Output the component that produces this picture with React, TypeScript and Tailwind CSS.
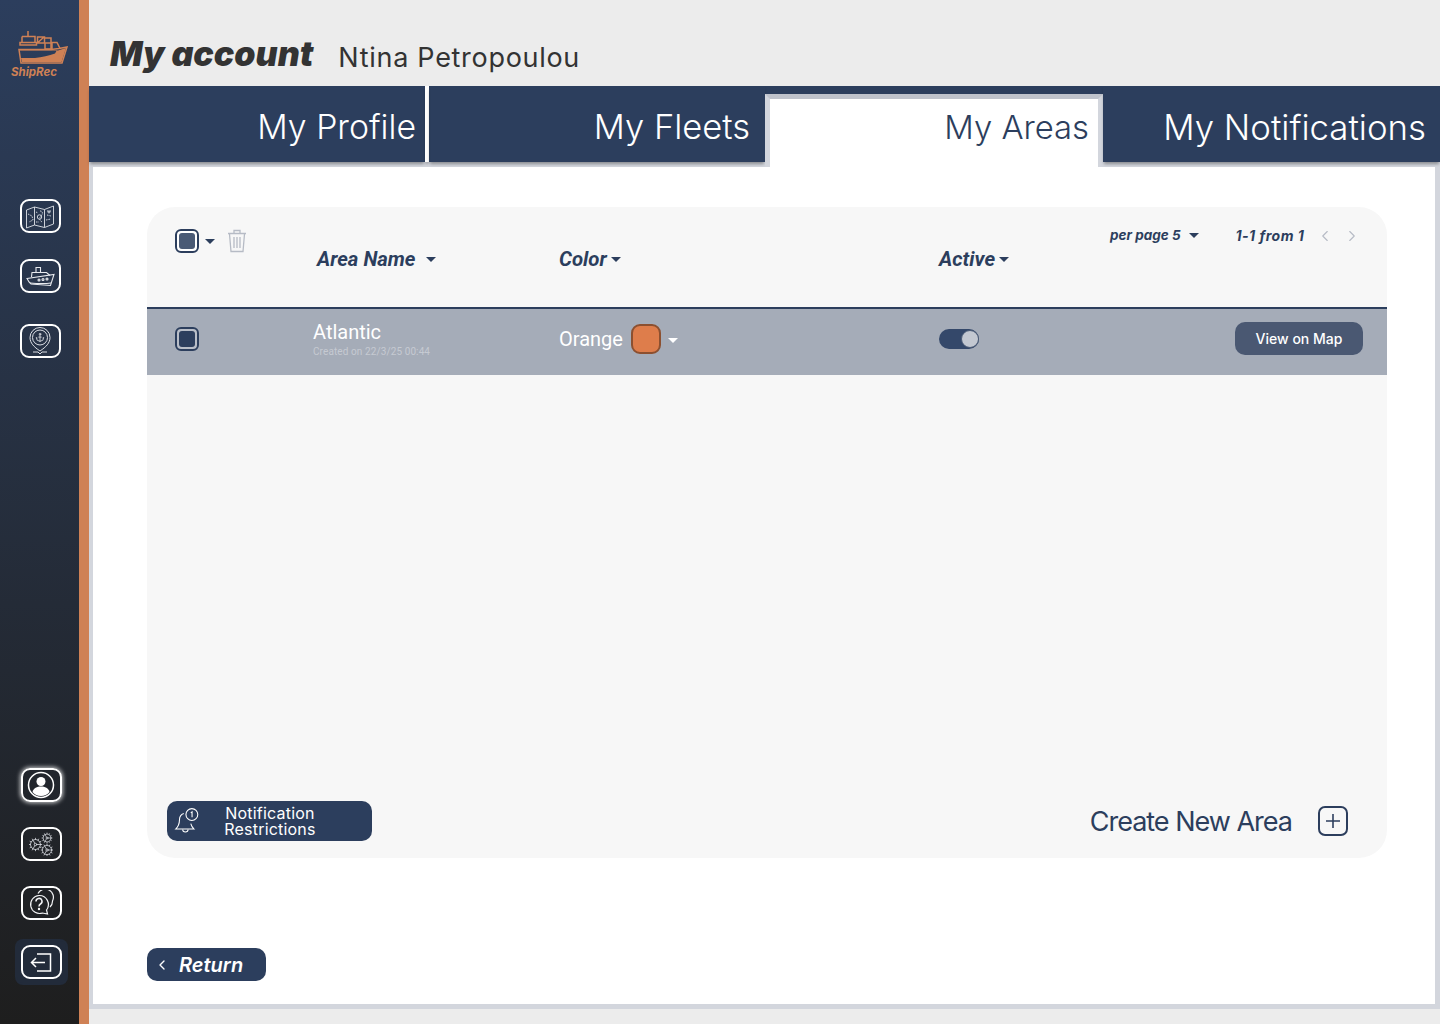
import { Anchor, ChevronLeft, ChevronRight, Cog } from "lucide-react";
import type { ReactNode } from "react";

const Caret = ({ white }: { white?: boolean }) => (
  <svg width="10" height="5" viewBox="0 0 10 5" className="shrink-0">
    <path d="M0 0h10L5 5z" fill={white ? "#ffffff" : "#2c3e5d"} />
  </svg>
);

const Checkbox = ({ fill, ring }: { fill: string; ring: string }) => (
  <div className={`w-[24px] h-[24px] rounded-[6px] border-[2px] border-[#2c3e5d] p-[2px] shrink-0 ${ring}`}>
    <div className={`w-full h-full rounded-[3px] ${fill}`} />
  </div>
);

const NavBox = ({ children, glow }: { children: ReactNode; glow?: boolean }) => (
  <div
    className={`w-[41px] h-[34px] rounded-[9px] border-[2px] border-white flex items-center justify-center ${
      glow ? "shadow-[0_0_4px_1px_rgba(255,255,255,0.75)]" : ""
    }`}
  >
    {children}
  </div>
);

// coordinates follow the logo as it sits in the sidebar, offset by (11, 31)
const LogoShip = () => (
  <svg width="57" height="34" viewBox="0 0 57 34" fill="none" stroke="#cf8155" strokeWidth="1.500">
    <path d="M17 0v5M11 5.500h13v6M11 5.500v6M9 11.500h16.500v2.500H9z" />
    <path d="M26.500 12V6h7v6h-7zM33.500 7h6.500v5M27 11.500l6-5.500M34 12h6v6h-6zM41 18v-6.500h5l3 6" />
    <path d="M8 18.500h32l8-1 8-1.500-5 16H10z" />
    <path d="M9 19.500h38l8-2.500-4.500 14H11l-1-4h14c7-1 14-2 20-4.500l2-3.500H9z" fill="#cf8155" stroke="none" />
  </svg>
);

const MapIcon = () => (
  <svg width="30" height="25" viewBox="0 0 30 25" fill="none" stroke="#dfe2e8" strokeWidth="0.900">
    <path d="M1.500 6l8-3 10 2.500 9-3.500v18l-9 3.500-10-2.500-8 3z" />
    <path d="M9.500 3v18M19.500 5.500v18" />
    <path d="M3 10l4 2 1 4-4 2M15 7c3 0 3 3 1 5s-2 4 1 6M22 7h4M22 11l4 1M21 16l5-1M11 8l2 1M11 18h3" strokeDasharray="1.500 1" />
    <circle cx="14.500" cy="13" r="2.200" />
    <circle cx="24" cy="8" r="1" />
  </svg>
);

const ShipIcon = () => (
  <svg width="29" height="23" viewBox="0 0 29 23" fill="none" stroke="#e8eaee" strokeWidth="1.100">
    <path d="M10 7.500V2.500h4.500v5M5.500 12l.5-4.500h14.500l3.500 3" />
    <path d="M1 13.500l27-4-3.500 11L5 19l-2-2z" />
    <circle cx="13" cy="15" r="1" />
    <circle cx="17" cy="14.500" r="1" />
    <circle cx="21" cy="14" r="1" />
    <path d="M4 18c6 .5 14 1 21 0" />
  </svg>
);

const PinIcon = () => (
  <svg width="26" height="30" viewBox="0 0 26 30" fill="none" stroke="#dde0e6" strokeWidth="1">
    <path d="M13 25C7 21 3 17 3 11.500a10 10 0 0 1 20 0C23 17 19 21 13 25z" />
    <circle cx="13" cy="11.500" r="7.500" />
    <path d="M6 26h5l2 2 2-2h5" />
    <Anchor x="8" y="6.500" size={10} color="#dde0e6" strokeWidth={2} />
  </svg>
);

const ProfileIcon = () => (
  <svg width="28" height="28" viewBox="0 0 28 28" fill="none">
    <circle cx="14" cy="14" r="12.500" stroke="#ffffff" strokeWidth="1.500" />
    <circle cx="14" cy="10.500" r="4.500" fill="#ffffff" />
    <path d="M5.500 21c1-4 4.500-5.500 8.500-5.500s7.500 1.500 8.500 5.500c-2 2.500-5 4-8.500 4s-6.500-1.500-8.500-4z" fill="#ffffff" />
  </svg>
);

const GearsIcon = () => (
  <svg width="24" height="24" viewBox="0 0 24 24" fill="none">
    <Cog x="-1" y="5" size={15} color="#d5d8de" strokeWidth={1.300} />
    <Cog x="12" y="0" size={12} color="#d5d8de" strokeWidth={1.400} />
    <Cog x="11" y="11" size={14} color="#d5d8de" strokeWidth={1.300} />
  </svg>
);

const HelpIcon = () => (
  <svg width="26" height="26" viewBox="0 0 26 26" fill="none" stroke="#f2f3f5" strokeWidth="1.200">
    <path d="M10 3.500A8 8 0 0 1 24.500 11a8 8 0 0 1-2.500 6" />
    <path d="M11 5.500a9 9 0 1 0 3.500 17.500l5 1-1-4a9 9 0 0 0-7.500-14.500z" />
    <path d="M8 11.500a3 3 0 1 1 4.500 2.500c-1 .6-1.500 1.200-1.500 2.500" strokeWidth="1.500" />
    <circle cx="11" cy="19" r="0.600" fill="#f2f3f5" />
  </svg>
);

const LogoutIcon = () => (
  <svg width="22" height="19" viewBox="0 0 22 19" fill="none" stroke="#ffffff" strokeWidth="1.500">
    <path d="M7 1h13.500v17H7M15 9.500H1.500M6 5L1.500 9.500 6 14" />
  </svg>
);

const BellIcon = () => (
  <svg width="28" height="28" viewBox="0 0 26 26" fill="none" stroke="#ffffff" strokeWidth="1">
    <path d="M10 6c-3 1-4 3-4 6 0 3-1 6-3.500 8.500h17c-1.500-1.500-2.500-3-3-5" />
    <path d="M9 21c0 3 5 3 5 0" />
    <circle cx="17.500" cy="7" r="5.500" />
    <path d="M16.500 5.500l1.200-1v5" />
  </svg>
);

const Header = () => (
  <header className="h-[86px] shrink-0 flex items-end pl-[21px] pb-[10px]">
    <h1 className="mb-[2px] font-['Inter'] italic font-black text-[34px] leading-[40px] text-[#333333]">My account</h1>
    <span className="ml-[25px] font-['Inter'] text-[27px] leading-[36px] tracking-[0.7px] text-[#333333]">Ntina Petropoulou</span>
  </header>
);

const Tabs = () => (
  <nav className="h-[76px] shrink-0 flex bg-[#2c3e5d] font-['Inter'] font-light relative z-10">
    <div className="w-[336px] flex justify-end items-center pt-[6px] pr-[9px] text-[33.800px] text-white shadow-[0_3px_3px_-1px_rgba(0,0,0,0.35)]">My Profile</div>
    <div className="w-[4px] bg-white shadow-[0_3px_3px_-1px_rgba(0,0,0,0.35)]" />
    <div className="w-[336px] flex justify-end items-center pt-[6px] pr-[15px] text-[34.500px] text-white shadow-[0_3px_3px_-1px_rgba(0,0,0,0.35)]">My Fleets</div>
    <div className="w-[338px] h-[73px] mt-[8px] bg-white border-[5px] border-b-0 border-[#d3d6dd] border-t-[#bfc3cc] flex justify-end pr-[9px] text-[32.800px] leading-[56px] text-[#2c3e5d]">
      My Areas
    </div>
    <div className="flex-1 flex justify-end items-center pt-[6px] pr-[14px] text-[34.800px] text-white shadow-[0_3px_3px_-1px_rgba(0,0,0,0.35)]">My Notifications</div>
  </nav>
);

const AreasTable = () => (
  <section className="h-[651px] w-[1240px] rounded-[28px] bg-[#f7f7f7] flex flex-col font-['Roboto'] overflow-hidden">
    <div className="h-[102px] shrink-0 border-b-[2px] border-[#2c3e5d] grid grid-cols-[170px_242px_379px_172px_1fr] text-[#2c3e5d]">
      <div className="flex items-start pl-[28px] pt-[22px] gap-[6px]">
        <Checkbox fill="bg-[#4a5a75]" ring="bg-white" />
        <div className="mt-[10px]">
          <Caret />
        </div>
        <svg width="20" height="25" viewBox="0 0 20 25" fill="none" stroke="#b6bbc5" strokeWidth="1.300" className="ml-[6px] -mt-[1px]">
          <path d="M1 5.500h18M7 5V2.500h6V5M2.500 6l1.500 17.500h12L17.500 6M7 9v11M10 9v11M13 9v11" />
        </svg>
      </div>
      <div className="flex items-start gap-[11px] pt-[40px] text-[20.300px] leading-[24px] italic font-bold">
        Area Name
        <div className="mt-[10px]">
          <Caret />
        </div>
      </div>
      <div className="flex items-start gap-[4px] pt-[40px] text-[20.400px] leading-[24px] italic font-bold">
        Color
        <div className="mt-[10px]">
          <Caret />
        </div>
      </div>
      <div className="flex items-start gap-[4px] pl-px pt-[40px] text-[20.400px] leading-[24px] italic font-bold">
        Active
        <div className="mt-[10px]">
          <Caret />
        </div>
      </div>
      <div className="flex items-start pt-[18px] font-['Inter'] text-[13.500px] leading-[20px] italic font-bold">
        <span>per page 5</span>
        <div className="ml-[8px] mt-[8px]">
          <Caret />
        </div>
        <span className="ml-[37px] mt-[1px] text-[14px] tracking-[0.5px]">1-1 from 1</span>
        <div className="flex ml-[12px] mt-[2px] gap-[9px] text-[#b6bbc5]">
          <ChevronLeft size={18} strokeWidth={1.500} />
          <ChevronRight size={18} strokeWidth={1.500} />
        </div>
      </div>
    </div>

    <div className="h-[66px] shrink-0 bg-[#a5acb8] pb-[6px] grid grid-cols-[170px_242px_379px_172px_1fr] items-center text-white">
      <div className="pl-[28px]">
        <Checkbox fill="bg-[#2c3e5d]" ring="bg-[#b9bec8]" />
      </div>
      <div className="-ml-[4px] pb-[2px] flex flex-col">
        <span className="mb-[2px] text-[20px] leading-[24px]">Atlantic</span>
        <span className="text-[10px] leading-[11px] tracking-[0.1px] text-[#c5cad2]">Created on 22/3/25 00:44</span>
      </div>
      <div className="flex items-center">
        <span className="text-[20px]">Orange</span>
        <div className="ml-[8px] w-[30px] h-[30px] rounded-[9px] border-[2px] border-[#8c5030] bg-[#de7d4b]" />
        <div className="ml-[7px] mt-[3px]">
          <Caret white />
        </div>
      </div>
      <div className="pl-px">
        <div className="w-[40px] h-[20px] rounded-full bg-[#34486a] flex justify-end items-center">
          <div className="w-[18px] h-[18px] rounded-full bg-[#c3c8d1] border border-[#4a5a75]" />
        </div>
      </div>
      <div className="flex justify-end pr-[24px] pb-[2px]">
        <button className="w-[128px] h-[33px] rounded-[10px] bg-[#4a5872] font-['Inter'] font-medium text-[14px] text-white">View on Map</button>
      </div>
    </div>

    <div className="flex-1 flex items-end justify-between pl-[20px] pr-[39px] pb-[17px]">
      <button className="w-[205px] h-[40px] rounded-[10px] bg-[#2c3e5d] flex items-center pl-[6px] text-white">
        <BellIcon />
        <span className="ml-[19px] w-[100px] text-center font-['Inter'] text-[16px] tracking-[0.2px] leading-[16px]">Notification Restrictions</span>
      </button>
      <div className="flex items-center gap-[26px] text-[#2c3e5d]">
        <span className="h-[40px] font-['Inter'] text-[27px] leading-[42px] tracking-[-1px]">Create New Area</span>
        <div className="w-[30px] h-[30px] rounded-[7px] border-[2px] border-[#2c3e5d] flex items-center justify-center">
          <svg width="14" height="14" viewBox="0 0 14 14" stroke="#2c3e5d" strokeWidth="1.600">
            <path d="M7 0v14M0 7h14" />
          </svg>
        </div>
      </div>
    </div>
  </section>
);

export default function App() {
  return (
    <div className="w-[1440px] h-[1024px] flex overflow-hidden bg-[#ececec]">
      <aside className="w-[79px] shrink-0 h-full bg-gradient-to-b from-[#2c3e5d] to-[#1e1e1e] flex flex-col items-center">
        <div className="pt-[31px] pl-[11px] flex flex-col items-start w-full">
          <LogoShip />
          <span className="font-['Inter'] italic font-bold text-[11.500px] leading-[12px] mt-[1px] text-[#cf8155]">ShipRec</span>
        </div>
        <div className="mt-[121px] ml-px flex flex-col gap-[26px]">
          <NavBox>
            <MapIcon />
          </NavBox>
          <NavBox>
            <ShipIcon />
          </NavBox>
          <div className="mt-[5px]">
            <NavBox>
              <PinIcon />
            </NavBox>
          </div>
        </div>
        <div className="mt-auto mb-[45px] flex flex-col gap-[25px] ml-[3px]">
          <NavBox glow>
            <ProfileIcon />
          </NavBox>
          <NavBox>
            <GearsIcon />
          </NavBox>
          <NavBox>
            <HelpIcon />
          </NavBox>
          <div className="-m-[4px] p-[4px] rounded-[6px] bg-[#222b3a] shadow-[0_0_0_2px_#222b3a]">
            <NavBox>
              <LogoutIcon />
            </NavBox>
          </div>
        </div>
      </aside>
      <div className="w-[10px] shrink-0 bg-[#cf8155]" />
      <main className="flex-1 flex flex-col">
        <Header />
        <Tabs />
        <div className="h-[847px] shrink-0 bg-white border-[5px] border-l-[4px] border-[#d3d6dd] pl-[54px] pt-[40px] flex flex-col">
          <AreasTable />
          <button className="mt-[90px] w-[119px] h-[33px] rounded-[10px] bg-[#2c3e5d] flex items-center pl-[7px] text-white">
            <ChevronLeft size={16} strokeWidth={2} />
            <span className="ml-[9px] font-['Inter'] italic font-semibold text-[20px]">Return</span>
          </button>
        </div>
      </main>
    </div>
  );
}
